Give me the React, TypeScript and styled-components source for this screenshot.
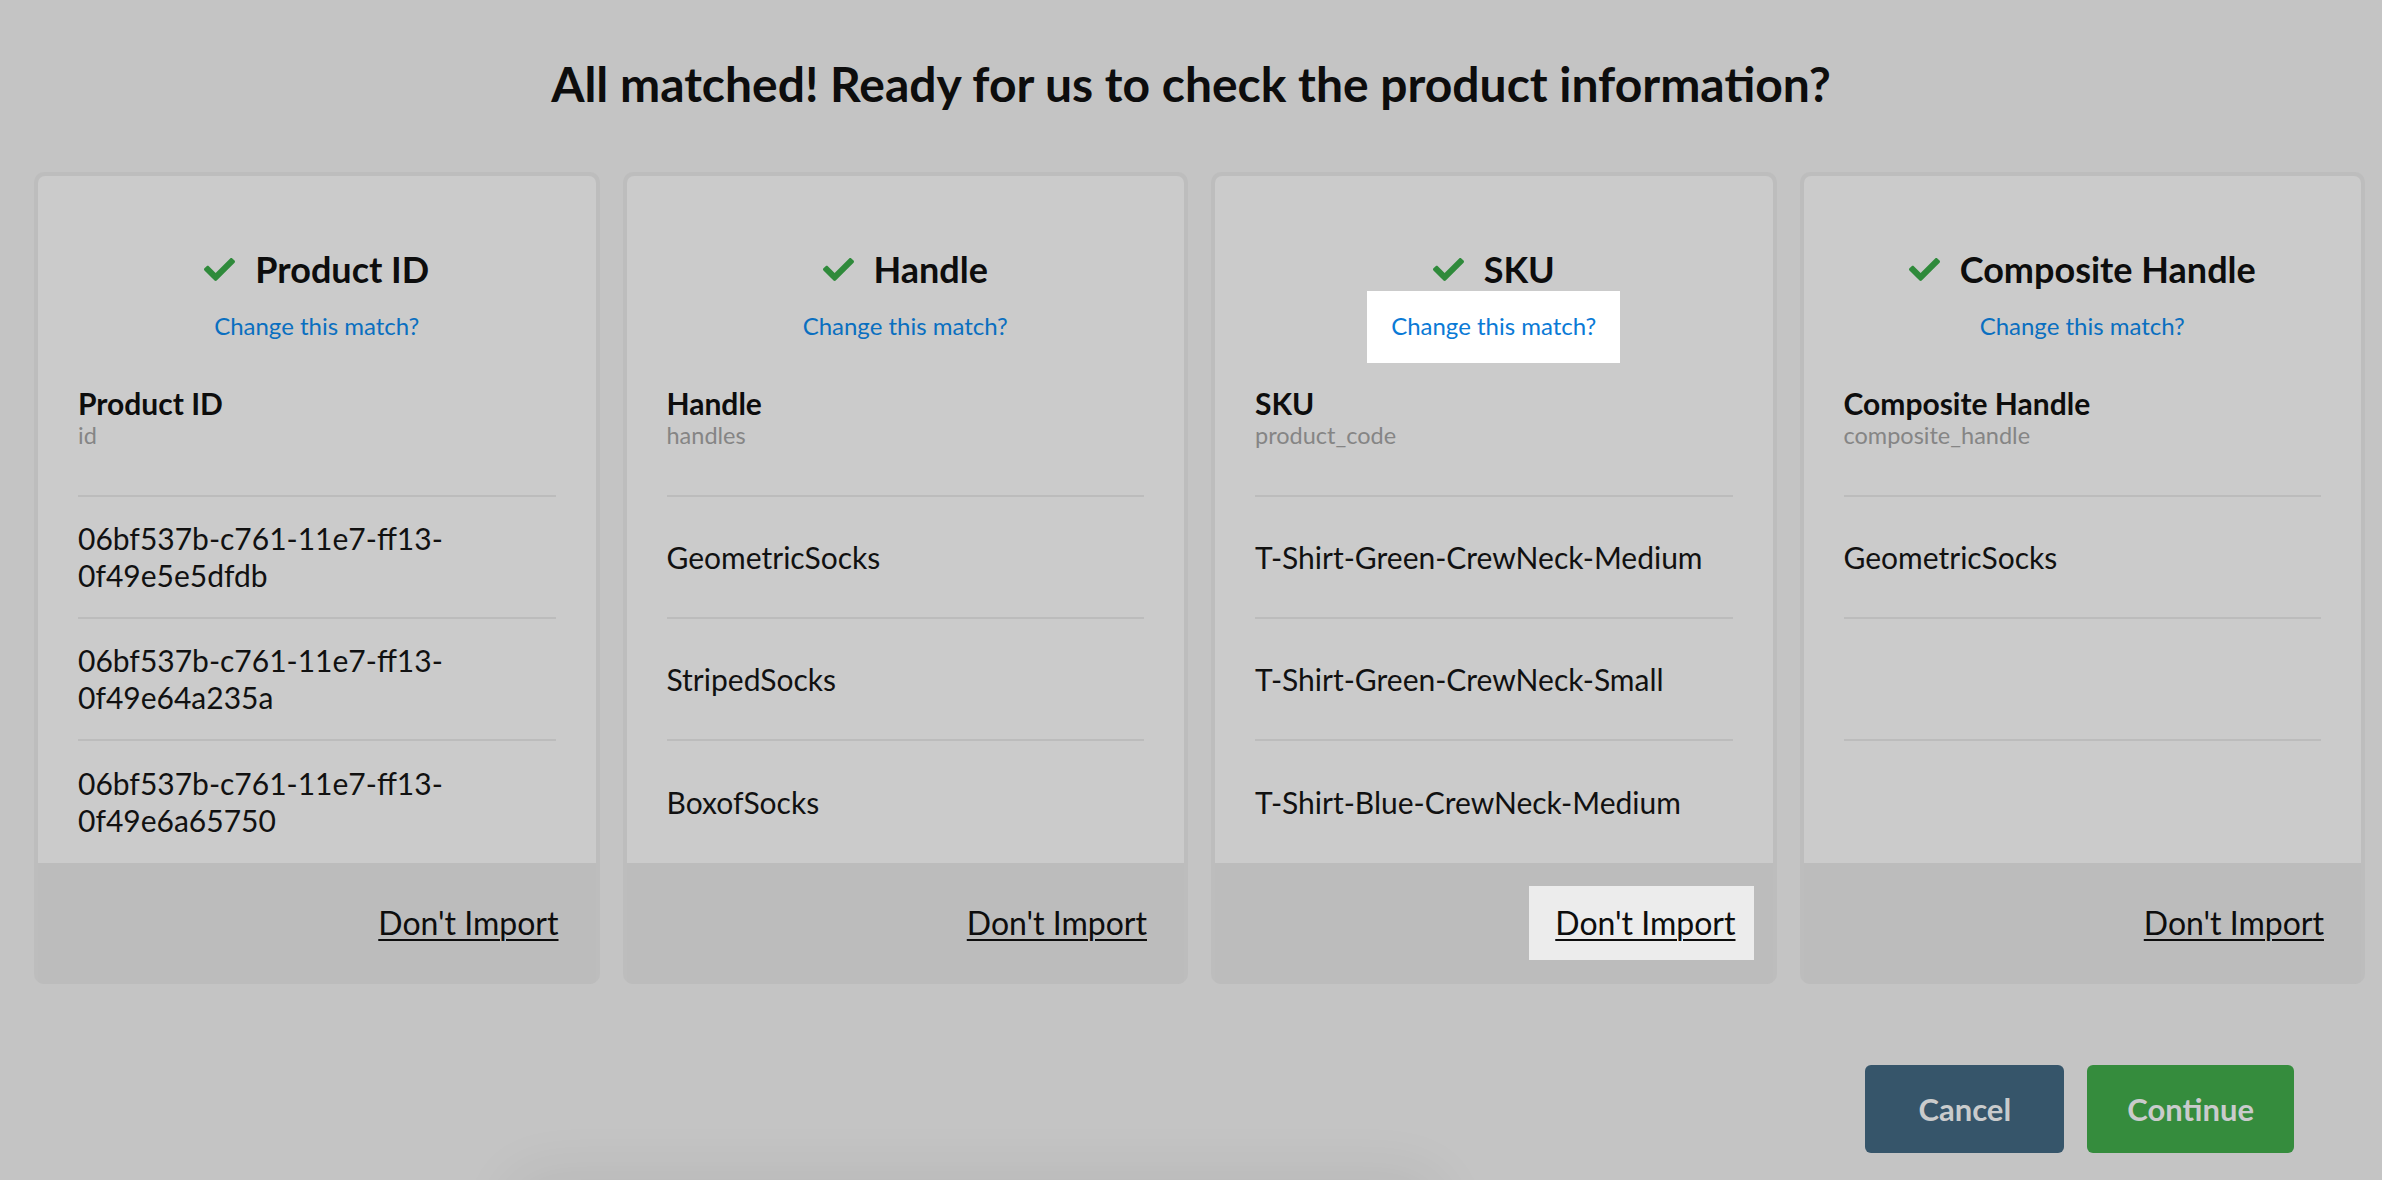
import React from "react";
import styled, { createGlobalStyle } from "styled-components";
import { FaCheck } from "react-icons/fa";

const GlobalStyle = createGlobalStyle`
  html, body {
    margin: 0;
    padding: 0;
    background: #c4c4c4;
    overflow: hidden;
  }
  * { box-sizing: border-box; }
  body {
    font-family: Lato, "Open Sans", "Liberation Sans", sans-serif;
    color: #111;
  }
`;

const Page = styled.div`
  position: relative;
  width: 2382px;
  height: 1180px;
  padding-top: 56px;
  background: #c4c4c4;
  overflow: hidden;
`;

const Heading = styled.h1`
  margin: 0;
  text-align: center;
  font-size: 48px;
  line-height: 56px;
  font-weight: 700;
  color: #0d0d0d;
`;

const CardGrid = styled.div`
  display: grid;
  grid-template-columns: repeat(4, 1fr);
  gap: 23px;
  padding: 0 17px 0 34px;
  margin-top: 60px;
`;

const Card = styled.section`
  display: flex;
  flex-direction: column;
  background: #bdbdbd;
  border-radius: 10px;
  padding: 4px 4px 0;
  overflow: hidden;
`;

const CardBody = styled.div`
  background: #cbcbcb;
  border-radius: 7px 7px 0 0;
  padding: 71px 40px 0;
`;

const CardHeader = styled.div`
  display: flex;
  flex-direction: column;
  align-items: center;
`;

const TitleRow = styled.div`
  display: flex;
  align-items: center;
  gap: 20px;
  color: #2f8a3b;
`;

const CardTitle = styled.h2`
  margin: 0;
  font-size: 36px;
  line-height: 44px;
  font-weight: 700;
  color: #0d0d0d;
`;

const ChangeLink = styled.a<{ $active?: boolean }>`
  display: inline-block;
  padding: 20px 24px 22px;
  font-size: 24px;
  line-height: 30px;
  color: ${(p) => (p.$active ? "#0a7ad6" : "#0a6fc0")};
  background: ${(p) => (p.$active ? "#ffffff" : "transparent")};
  text-decoration: none;
  cursor: pointer;
`;

const FieldInfo = styled.div`
  margin-top: 22px;
  padding-bottom: 46px;
  border-bottom: 2px solid #bcbcbc;
`;

const FieldName = styled.div`
  font-size: 30px;
  line-height: 36px;
  font-weight: 700;
  color: #0d0d0d;
`;

const FieldKey = styled.div`
  font-size: 23.5px;
  line-height: 28px;
  color: #858585;
`;

const Row = styled.div<{ $last?: boolean }>`
  display: flex;
  align-items: center;
  height: 122px;
  font-size: 30px;
  line-height: 37px;
  color: #111;
  border-bottom: ${(p) => (p.$last ? "none" : "2px solid #bcbcbc")};
`;

const CardFooter = styled.div`
  display: flex;
  justify-content: flex-end;
  padding: 23px 19px 24px;
  background: #bcbcbc;
`;

const DontImport = styled.button<{ $active?: boolean }>`
  font-family: inherit;
  font-size: 32px;
  line-height: 38px;
  color: #0d0d0d;
  text-decoration: underline;
  text-underline-offset: 4px;
  text-decoration-thickness: 2px;
  padding: 18px 18px 18px 26px;
  border: none;
  background: ${(p) => (p.$active ? "#ececec" : "transparent")};
  cursor: pointer;
`;

const Actions = styled.div`
  display: flex;
  justify-content: flex-end;
  gap: 23px;
  padding-right: 88px;
  margin-top: 81px;
`;

const ActionButton = styled.button<{ $variant: "cancel" | "continue" }>`
  min-width: 199px;
  height: 88px;
  padding: 0 40px;
  border: none;
  border-radius: 6px;
  font-family: inherit;
  font-size: 31px;
  font-weight: 700;
  color: #c9cbcc;
  background: ${(p) => (p.$variant === "cancel" ? "#36556a" : "#358c3d")};
  cursor: pointer;
`;

const BackdropShadow = styled.div`
  position: absolute;
  left: 530px;
  width: 890px;
  top: 1195px;
  height: 200px;
  border-radius: 12px;
  background: #bdbdbd;
  box-shadow: 0 0 60px 20px rgba(0, 0, 0, 0.07);
`;

type CardData = {
  title: string;
  field: string;
  key: string;
  rows: string[][];
  activeLink?: boolean;
  activeImport?: boolean;
};

const cards: CardData[] = [
  {
    title: "Product ID",
    field: "Product ID",
    key: "id",
    rows: [
      ["06bf537b-c761-11e7-ff13-", "0f49e5e5dfdb"],
      ["06bf537b-c761-11e7-ff13-", "0f49e64a235a"],
      ["06bf537b-c761-11e7-ff13-", "0f49e6a65750"],
    ],
  },
  {
    title: "Handle",
    field: "Handle",
    key: "handles",
    rows: [["GeometricSocks"], ["StripedSocks"], ["BoxofSocks"]],
  },
  {
    title: "SKU",
    field: "SKU",
    key: "product_code",
    rows: [
      ["T-Shirt-Green-CrewNeck-Medium"],
      ["T-Shirt-Green-CrewNeck-Small"],
      ["T-Shirt-Blue-CrewNeck-Medium"],
    ],
    activeLink: true,
    activeImport: true,
  },
  {
    title: "Composite Handle",
    field: "Composite Handle",
    key: "composite_handle",
    rows: [["GeometricSocks"], [], []],
  },
];

export default function App() {
  return (
    <>
      <GlobalStyle />
      <Page>
        <Heading>All matched! Ready for us to check the product information?</Heading>
        <CardGrid>
          {cards.map((c) => (
            <Card key={c.title}>
              <CardBody>
                <CardHeader>
                  <TitleRow>
                    <FaCheck size={31} />
                    <CardTitle>{c.title}</CardTitle>
                  </TitleRow>
                  <ChangeLink $active={c.activeLink}>Change this match?</ChangeLink>
                </CardHeader>
                <FieldInfo>
                  <FieldName>{c.field}</FieldName>
                  <FieldKey>{c.key}</FieldKey>
                </FieldInfo>
                {c.rows.map((lines, i) => (
                  <Row key={i} $last={i === c.rows.length - 1}>
                    <span>
                      {lines.map((l, j) => (
                        <React.Fragment key={j}>
                          {j > 0 && <br />}
                          {l}
                        </React.Fragment>
                      ))}
                    </span>
                  </Row>
                ))}
              </CardBody>
              <CardFooter>
                <DontImport $active={c.activeImport}>Don't Import</DontImport>
              </CardFooter>
            </Card>
          ))}
        </CardGrid>
        <Actions>
          <ActionButton $variant="cancel">Cancel</ActionButton>
          <ActionButton $variant="continue">Continue</ActionButton>
        </Actions>
        <BackdropShadow />
      </Page>
    </>
  );
}
